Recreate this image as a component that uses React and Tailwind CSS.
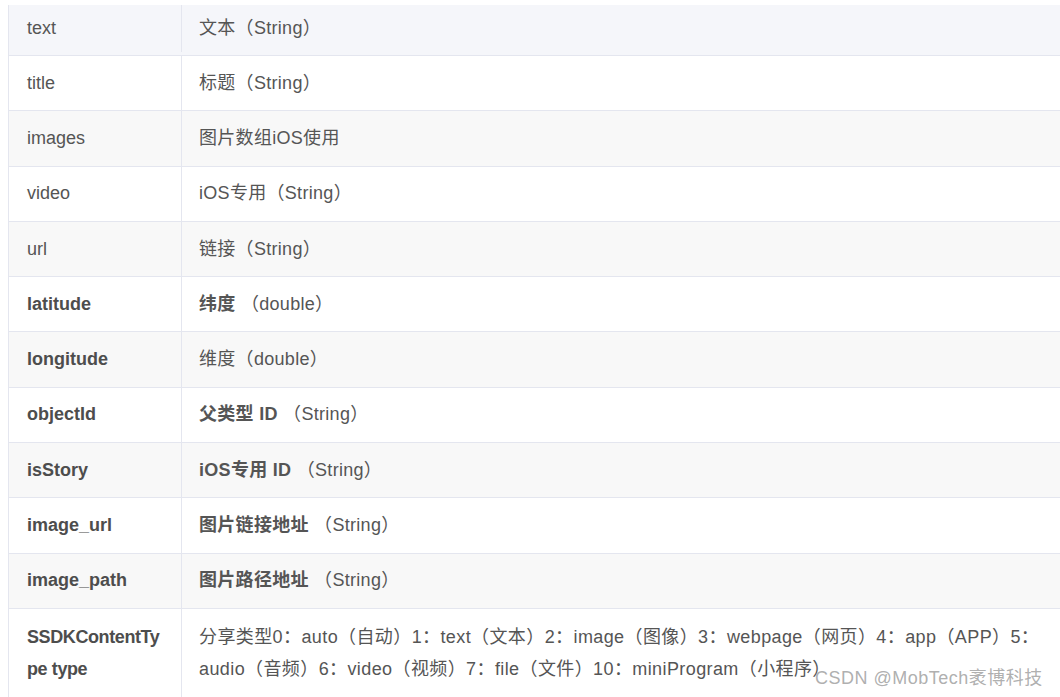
import React from "react";

const rows = [
  { k: "text", v: <>文本（String）</> },
  { k: "title", v: <>标题（String）</> },
  { k: "images", v: <>图片数组iOS使用</> },
  { k: "video", v: <>iOS专用（String）</> },
  { k: "url", v: <>链接（String）</> },
  { k: "latitude", b: true, v: <><span className="font-bold">纬度</span>&nbsp;（double）</> },
  { k: "longitude", b: true, v: <>维度（double）</> },
  { k: "objectId", b: true, v: <><span className="font-bold">父类型 ID</span>&nbsp;（String）</> },
  { k: "isStory", b: true, v: <><span className="font-bold">iOS专用 ID</span>&nbsp;（String）</> },
  { k: "image_url", b: true, v: <><span className="font-bold">图片链接地址</span>&nbsp;（String）</> },
  { k: "image_path", b: true, v: <><span className="font-bold">图片路径地址</span>&nbsp;（String）</> },
];

export default function App() {
  return (
    <div
      className="relative w-[1060px] h-[697px] overflow-hidden bg-white text-[18px] text-[#555]"
      style={{ fontFamily: '"Liberation Sans", "Noto Sans CJK SC", sans-serif' }}
    >
      <div className="ml-[8px] mt-[5px] w-[1080px] border-l border-[#e4e6ef]">
        {rows.map((r, i) => (
          <div
            key={r.k}
            className={
              "flex border-b border-[#e4e6ef] " +
              (i === 0 ? "h-[51px] pb-[3px] bg-[#f5f6fa] " : "h-[55.3px] ") +
              (i > 0 && i % 2 === 0 ? "bg-[#f8f8f8]" : i > 0 ? "bg-white" : "")
            }
          >
            <div
              className={
                "w-[173px] shrink-0 border-r border-[#e4e6ef] pl-[18px] flex items-center " +
                (r.b ? "font-bold text-[#4d4d4d]" : "")
              }
            >
              {r.k}
            </div>
            <div className="flex-1 pl-[17px] flex items-center whitespace-nowrap tracking-[0.3px]">{r.v}</div>
          </div>
        ))}
        <div className="flex bg-white">
          <div className="w-[173px] shrink-0 border-r border-[#e4e6ef] pl-[18px] pt-[12px] pb-[12px] leading-[32px] font-bold text-[#4d4d4d] whitespace-nowrap tracking-[-0.4px]">
            SSDKContentTy
            <br />
            pe type
          </div>
          <div className="flex-1 pl-[17px] pt-[12px] pb-[12px] leading-[32px] whitespace-nowrap tracking-[0.4px]">
            分享类型0：auto（自动）1：text（文本）2：image（图像）3：webpage（网页）4：app（APP）5：
            <br />
            audio（音频）6：video（视频）7：file（文件）10：miniProgram（小程序）
          </div>
        </div>
      </div>
      <div className="absolute left-[815px] top-[666px] text-[18px] leading-[24px] tracking-[0.5px] text-[#9a9a9a]/80 whitespace-nowrap">
        CSDN @MobTech袤博科技
      </div>
    </div>
  );
}
